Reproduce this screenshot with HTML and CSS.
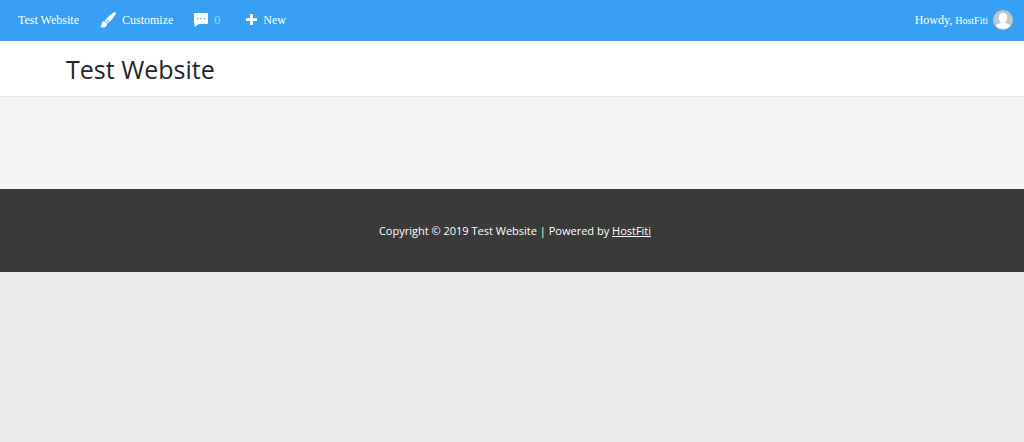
FILE: index.html
```html
<!DOCTYPE html>
<html lang="en">
<head>
<meta charset="utf-8">
<meta name="viewport" content="width=device-width, initial-scale=1">
<title>Test Website</title>
<link rel="stylesheet" href="styles.css">
</head>
<body>
<nav class="admin-bar" aria-label="Toolbar">
  <a class="bar-link bar-site" href="#"><span class="label">Test Website</span></a>
  <a class="bar-link bar-customize" href="#">
    <svg class="icon-brush" viewBox="0 0 16 16" aria-hidden="true"><path d="M15.600.4c.7.7.3 1.700-.5 2.800-1.600 2.300-3.900 5.100-5.900 6.900L6 7.100C8 4.900 10.900 2.200 13.300.7c.9-.6 1.700-.9 2.300-.3zM5.600 7.500l3.200 3c-.3.400-.7.700-1.100.9L4.500 8.500zM3.900 8.900l3.200 2.900c.1 2-1.600 3.600-3.700 3.800-1.300.1-2.600-.2-3.300-.8 1.100-.3 1.300-1.300 1.400-2.600.1-1.500 1-2.900 2.400-3.300z"/></svg>
    <span class="label">Customize</span>
  </a>
  <a class="bar-link bar-comments" href="#" aria-label="0 comments">
    <svg class="icon-comment" viewBox="0 0 14 14" aria-hidden="true"><path fill-rule="evenodd" d="M1 0h12q1 0 1 1v9q0 1-1 1H5l-4.500 3V11Q0 11 0 10V1q0-1 1-1zM3 5v1.200h1.200V5zm3.400 0v1.200h1.200V5zm3.400 0v1.200h1.200V5z"/></svg>
    <span class="label count">0</span>
  </a>
  <a class="bar-link bar-new" href="#">
    <svg class="icon-plus" viewBox="0 0 12 12" aria-hidden="true"><path d="M4.500 0h3v4.500H12v3H7.500V12h-3V7.500H0v-3h4.500z"/></svg>
    <span class="label">New</span>
  </a>
  <a class="bar-link bar-account" href="#">
    <span class="label">Howdy, <span class="user-name">HostFiti</span></span>
    <svg class="avatar" viewBox="0 0 20 20" aria-hidden="true"><circle cx="10" cy="10" r="10" fill="#c3c5c8"/><path fill="#fff" d="M10 3c2.700 0 4.300 1.900 4.300 4.500 0 1.900-.8 3.600-1.900 4.500v1.100c2 .7 4 1.300 4.700 2.800A10 10 0 0 1 10 19a10 10 0 0 1-7.100-3.100c.7-1.500 2.700-2.100 4.700-2.800V12c-1.100-.9-1.900-2.600-1.900-4.500C5.700 4.900 7.300 3 10 3z"/></svg>
  </a>
</nav>
<header class="site-header">
  <h1 class="site-title"><a href="#">Test Website</a></h1>
</header>
<main class="site-content"></main>
<footer class="site-footer">
  <p class="copyright">Copyright © 2019 Test Website | Powered by <a href="#">HostFiti</a></p>
</footer>
</body>
</html>
```
FILE: styles.css
```css
* { box-sizing: border-box; }

body {
  margin: 0;
  background: #ebebeb;
  font-family: "Open Sans", "Noto Sans", sans-serif;
}

a { color: inherit; text-decoration: none; }

.admin-bar {
  display: flex;
  align-items: center;
  height: 41px;
  padding: 0 11px 2px 18px;
  background: #379ff4;
  color: #fff;
  font-family: "Liberation Serif", serif;
  font-size: 12px;
}

.bar-link {
  display: flex;
  align-items: center;
  gap: 6px;
  margin-right: 21px;
  white-space: nowrap;
}

.bar-link svg { flex: none; fill: currentColor; }
.label { padding-top: 2px; }
.bar-comments { margin-right: 26px; }
.bar-account { gap: 5px; margin: 0 0 0 auto; }

.icon-brush { width: 16px; height: 16px; }
.icon-comment { width: 14px; height: 14px; }
.icon-plus { width: 11px; height: 11px; }
.count { color: #a6d3fa; }
.user-name { font-size: 10px; }
.avatar { width: 20px; height: 20px; }

.site-header {
  padding: 9px 66px 8px;
  background: #fff;
  border-bottom: 1px solid #e6e6e6;
}

.site-title {
  margin: 0;
  color: #262626;
  font-size: 25px;
  font-weight: 400;
  line-height: 38px;
}

.site-content {
  min-height: 92px;
  background: #f4f4f4;
}

.site-footer {
  padding: 32px 0 31px 6px;
  background: #3a3a3a;
  color: #fff;
  text-align: center;
}

.copyright {
  margin: 0;
  font-size: 11px;
  line-height: 20px;
}

.copyright a { text-decoration: underline; }
```
